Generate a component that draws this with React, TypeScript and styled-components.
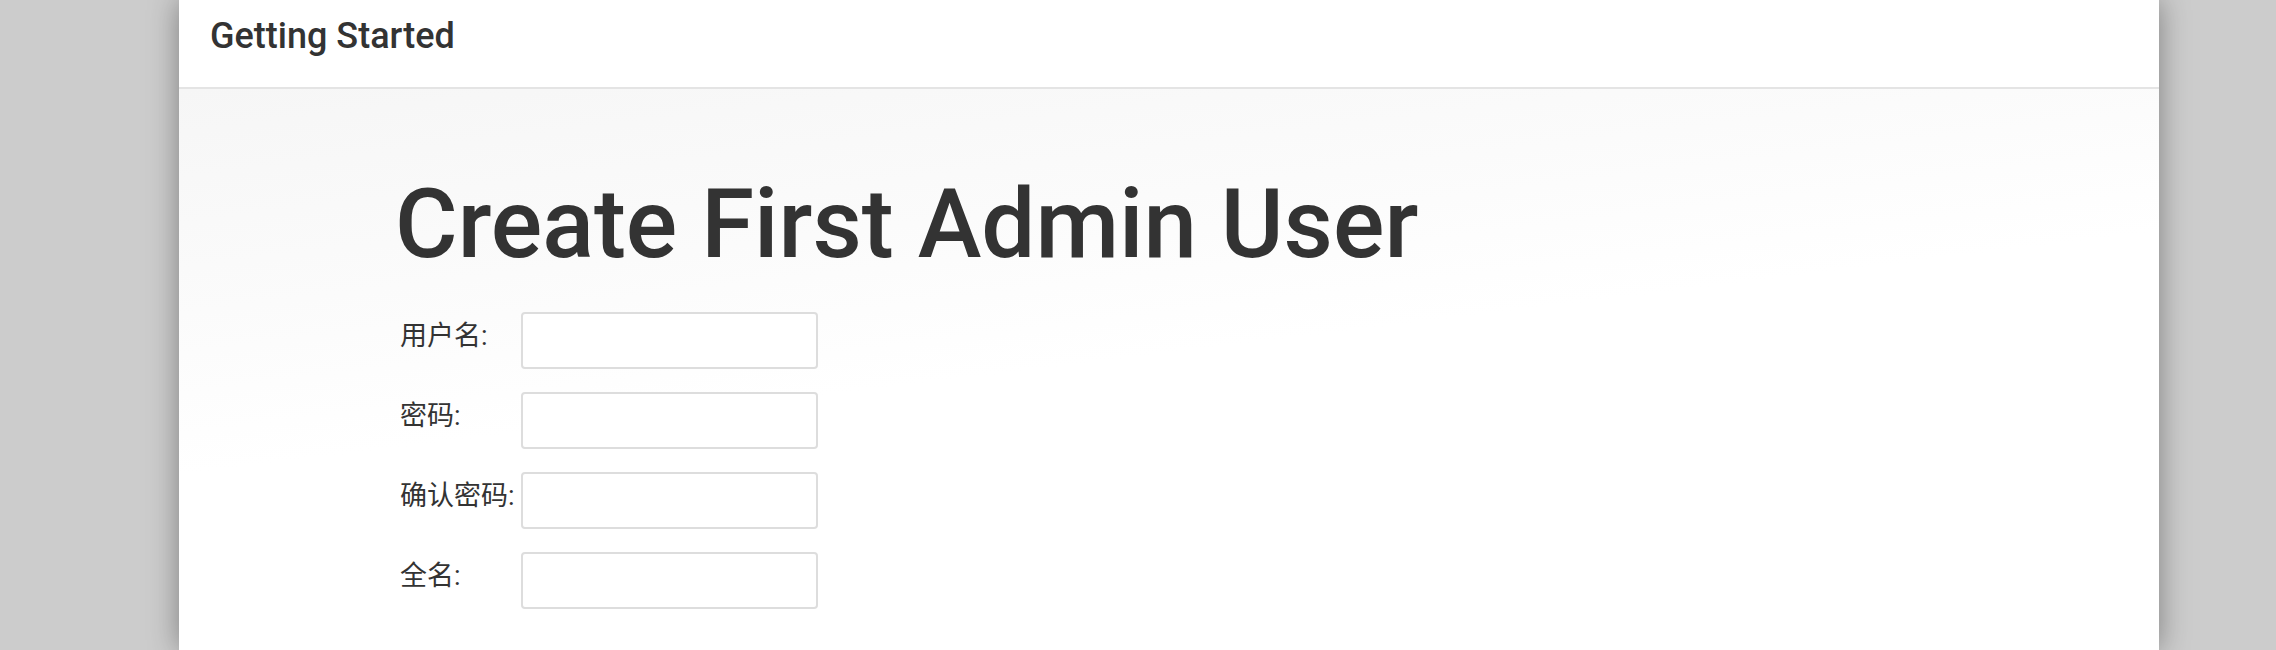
import React from "react";
import styled, { createGlobalStyle } from "styled-components";

const GlobalStyle = createGlobalStyle`
  html, body {
    margin: 0;
    padding: 0;
    background: #cccccc;
    font-family: "Roboto", "Noto Sans CJK SC", sans-serif;
    color: #333333;
  }
  * { box-sizing: border-box; }
`;

const Page = styled.div`
  display: flex;
  min-height: 650px;
  padding-left: 179px;
  overflow: hidden;
`;

const Panel = styled.div`
  width: 1980px;
  min-height: 650px;
  display: flex;
  flex-direction: column;
  background: #ffffff;
  box-shadow: 0 0 28px rgba(0, 0, 0, 0.38);
`;

const Header = styled.header`
  height: 89px;
  padding: 18px 0 0 31px;
  border-bottom: 2px solid #e4e4e4;
  background: #ffffff;
`;

const HeaderTitle = styled.h1`
  margin: 0;
  font-size: 36px;
  line-height: 36px;
  font-weight: 500;
  color: #333333;
`;

const Body = styled.main`
  flex: 1;
  padding: 87px 0 0 221px;
  background: linear-gradient(173deg, #f6f6f6 0%, #fbfbfb 28%, #ffffff 48%);
`;

const Title = styled.h2`
  margin: 0 0 0 -5px;
  font-size: 96px;
  line-height: 96px;
  font-weight: 500;
  color: #333333;
`;

const Form = styled.div`
  display: flex;
  flex-direction: column;
  gap: 23px;
  margin-top: 40px;
`;

const Row = styled.div`
  display: flex;
  align-items: flex-start;
`;

const Label = styled.label`
  width: 121px;
  padding-top: 9px;
  font-size: 27px;
  line-height: 30px;
  color: #333333;
  white-space: nowrap;
`;

const Input = styled.input`
  width: 297px;
  height: 57px;
  border: 2px solid #dddddd;
  border-radius: 4px;
  background: #ffffff;
  font-family: inherit;
  font-size: 25px;
  padding: 0 10px;
  outline: none;
`;

const fields = ["用户名:", "密码:", "确认密码:", "全名:"];

export default function App() {
  return (
    <>
      <GlobalStyle />
      <Page>
        <Panel>
          <Header>
            <HeaderTitle>Getting Started</HeaderTitle>
          </Header>
          <Body>
            <Title>Create First Admin User</Title>
            <Form>
              {fields.map((f, i) => (
                <Row key={f}>
                  <Label>{f}</Label>
                  <Input type={i === 1 || i === 2 ? "password" : "text"} />
                </Row>
              ))}
            </Form>
          </Body>
        </Panel>
      </Page>
    </>
  );
}
